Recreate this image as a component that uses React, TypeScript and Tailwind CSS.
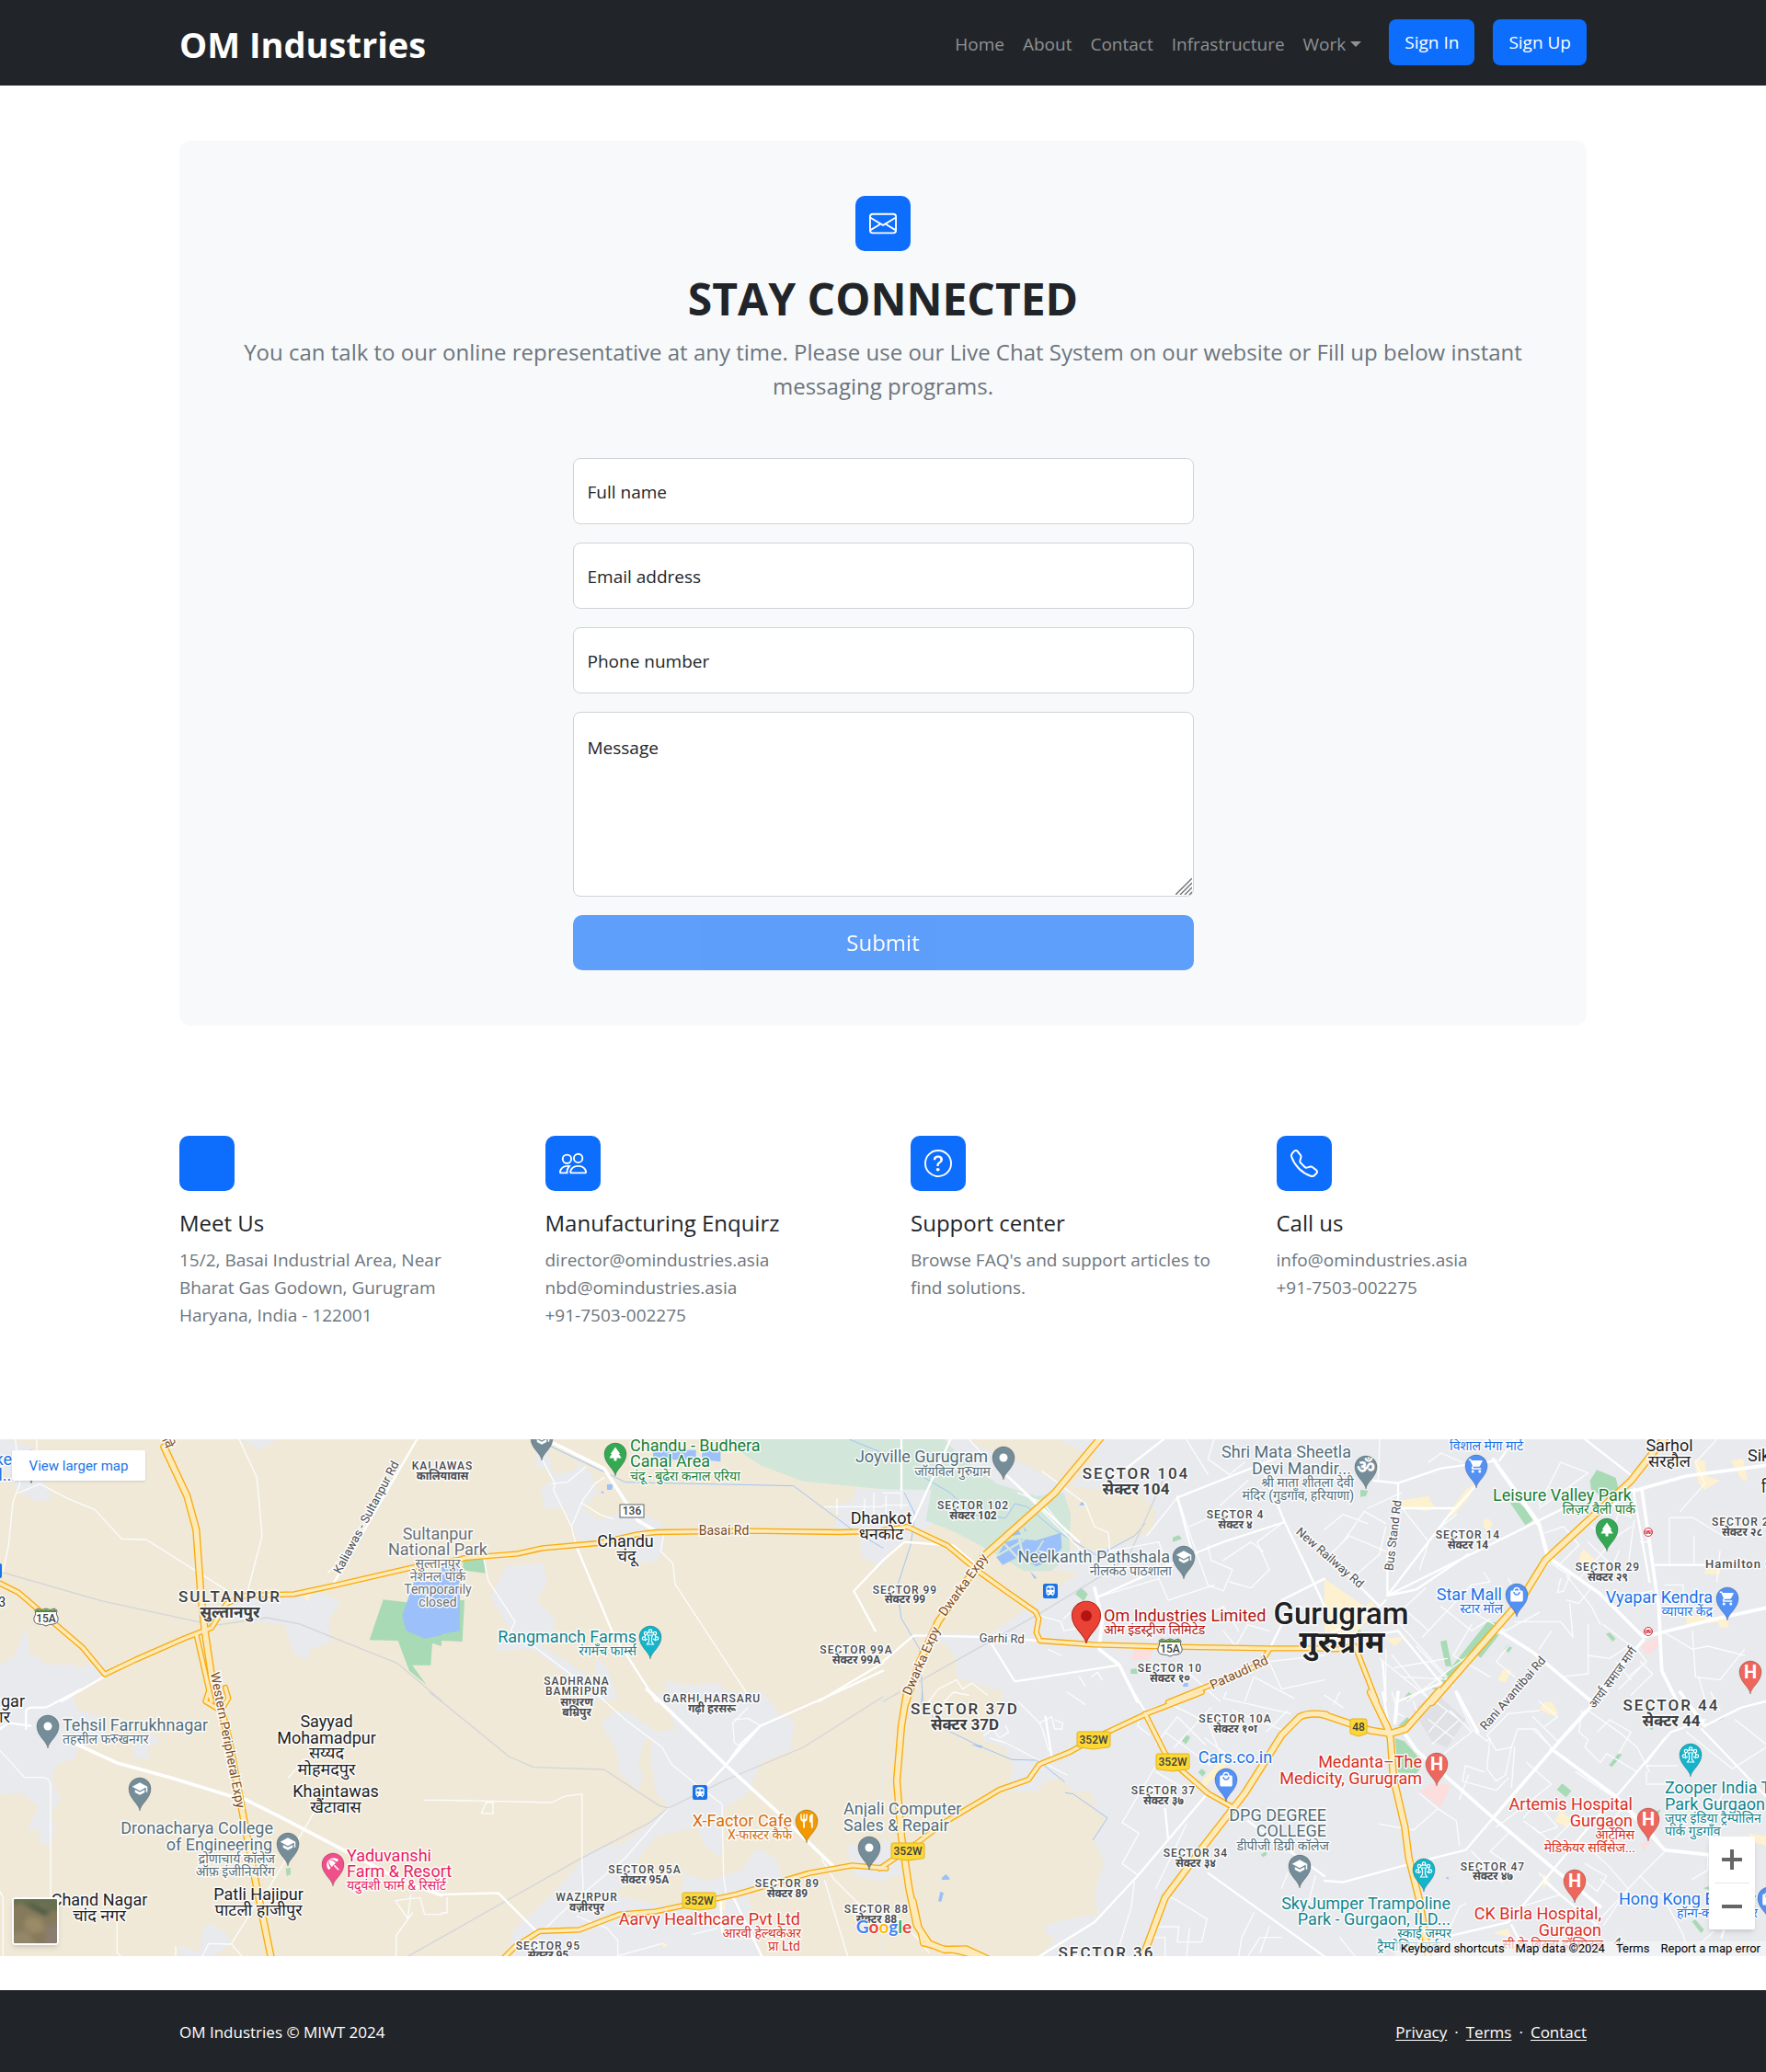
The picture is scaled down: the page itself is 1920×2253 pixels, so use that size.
import type { ReactNode } from "react";
import { BsEnvelope, BsPeople, BsQuestionCircle, BsTelephone } from "react-icons/bs";
import { MdBeachAccess, MdLocalMall, MdPark, MdRestaurant, MdSchool, MdShoppingCart, MdTrain } from "react-icons/md";

/* ---------- Map data: eight tiles, three units to a pixel ---------- */

type Tile = "A" | "B" | "C" | "D" | "E" | "F" | "G" | "H";

const origin: Record<Tile, [number, number]> = {
  A: [0, -5],
  B: [480, -5],
  C: [960, -5],
  D: [1440, -5],
  E: [0, 275],
  F: [480, 275],
  G: [960, 275],
  H: [1440, 275],
};

const place = (t: Tile, x: number, y: number): [number, number] => [
  Math.round(origin[t][0] + x / 3),
  Math.round(origin[t][1] + y / 3),
];

const LAND = "#f0e9d8";
const TOWN = "#e8eaed";
const GOLF = "#d2e6da";
const PARK = "#a8dab5";
const WATER = "#9cc0f9";
const SHOPS = "#fdf1cf";
const CLINIC = "#fbdedd";

const areas: [Tile, string, string][] = [
  ["A", TOWN, "M20 15L100 40L125 110L170 212L120 218L60 180L0 100V15z"],
  ["A", TOWN, "M780 15H905L845 52L820 30z"],
  ["A", TOWN, "M760 530L1040 515L1112 545L1075 600V680L1010 700L1005 738L955 710L930 620L760 600z"],
  ["A", SHOPS, "M985 525L1015 518L1005 545z"],
  ["A", TOWN, "M85 625L98 720L130 725L150 775L210 780L345 730L330 790L190 875H0V750L45 725z"],
  ["A", PARK, "M1250 538L1440 560V690L1410 680L1405 752H1345L1390 815L1335 770L1298 672L1205 670z"],
  ["A", WATER, "M1350 480H1440V655L1385 665L1325 640L1312 590z"],
  ["B", PARK, "M70 410L138 405L143 452L70 442zM0 540H75L68 675L0 672z"],
  ["B", WATER, "M0 425L60 430V640L0 650z"],
  ["B", TOWN, "M310 60L345 50L365 130L430 120L450 90L490 130L510 190L460 240L515 280L580 255L640 250L720 290L725 370L700 415L650 418L560 350L450 350L400 240L335 240L325 170L360 150L350 110L310 110z"],
  ["B", TOWN, "M210 430L330 420L345 480L310 540L370 600L365 640L330 690L500 800L505 730L540 760L575 860L500 870L400 780L300 700L170 705L225 640L160 530z"],
  ["B", TOWN, "M730 800L800 820L900 810L950 850L1020 840V870H740z"],
  ["B", GOLF, "M915 15H1440V178L1180 152L1040 100z"],
  ["B", TOWN, "M1350 175L1440 178V430L1370 400L1365 330L1280 300L1300 250L1250 240L1345 215z"],
  ["B", WATER, "M690 50H910V88L850 82V50H830V82H745L690 72zM540 162H560L555 180H540zM520 190L525 182L530 192z"],
  ["C", TOWN, "M0 15H1440V870H0z"],
  ["C", LAND, "M275 15H570L640 50L700 78L600 175L580 165L480 105L360 60z"],
  ["C", LAND, "M600 165L700 180L840 190L890 250L880 310L800 350L690 380L610 370z"],
  ["C", LAND, "M0 400L90 330L190 280L330 370L400 400L500 450L570 440L640 450L480 560L350 650H0z"],
  ["C", LAND, "M0 640L100 655L200 680L240 730V790L385 840L390 875H0z"],
  ["C", GOLF, "M0 15H200L250 70L370 160L500 200L590 190L612 260L608 390L550 445H460L370 390L240 320L140 280L158 180L0 178z"],
  ["C", WATER, "M370 400L400 350L440 340L500 345L580 320L583 370L550 410L500 430L440 400L390 425zM420 330L440 310L450 325zM460 300L468 315H462zM480 447L500 465L495 472zM640 230L650 215L657 230zM980 810H995V822H978z"],
  ["C", GOLF, "M396 350L442 400L436 404L390 355zM448 338L462 395L455 400L440 342zM370 392L460 340L464 345L374 398zM470 425L520 345L526 345L478 425z"],
  ["C", PARK, "M627 520L645 498L668 520L655 543zM945 335L965 328L975 340L945 350zM808 765L830 762V780H808z"],
  ["C", CLINIC, "M822 695L880 700L870 735L808 732z"],
  ["D", TOWN, "M-2 15H1440V870H-2z"],
  ["D", PARK, "M866 150L888 115L950 140L965 200L930 215L870 180zM605 222H635L690 272L655 295zM378 675L398 670L415 755H395zM380 800L530 612H570L390 812zM335 850L355 825L375 825L350 862zM495 718L540 650L570 652L510 728zM918 650L930 645L950 665L940 675zM587 700L597 686L612 695L600 712zM262 855L275 838L287 845L272 862zM100 630L120 640L118 650H90zM117 180L142 182L135 200L117 203z"],
  ["D", SHOPS, "M400 262L460 180L490 160L475 200L420 265zM250 215L340 200L345 215L365 240L330 250L250 235zM517 280L535 272L550 295L530 312L517 298zM830 400L845 372L888 415L830 420zM0 470L130 560L160 540V580L100 650L20 700L0 690zM1205 80L1240 85L1245 135L1290 150L1240 180L1220 160zM1325 85L1365 78L1380 150L1360 145zM1180 590L1320 600L1315 630H1290L1285 612L1180 620zM565 800L580 770L610 765L590 810zM1240 440L1290 430V455H1240zM200 665L260 660L230 690z"],
  ["D", CLINIC, "M1030 690L1085 660L1088 690L1055 720z"],
  ["E", TOWN, "M0 -90H250L240 30L260 60L330 80L340 150L250 180L245 215L185 235L170 270L175 310L200 345L165 395L180 440L165 500L130 490L125 450L90 450L125 375L75 330L0 335z"],
  ["E", TOWN, "M435 165L500 130L520 165L480 180L490 220L437 212zM665 762L690 755L740 790L755 820L680 870H590L585 825L650 850zM960 270L940 280V275z"],
  ["E", PARK, "M932 575L947 572L948 595L935 600z"],
  ["F", TOWN, "M700 0H1050L1100 70L1150 90L1140 190L1040 230L1000 330L920 380L910 540L860 500L830 440L700 470L650 530L620 610L560 660L690 690L780 700L790 590L870 615L980 580L1025 510L1090 540L1110 600L1000 660L1040 860H210L240 770L330 690L380 640L480 520L600 490L690 420L740 370L700 330L680 200L690 150L660 160L640 240L660 270L640 320L580 260L570 190L520 100L570 60L620 70L700 130L765 120L740 60z"],
  ["F", TOWN, "M1320 500H1440V620L1350 600z"],
  ["F", SHOPS, "M905 680H925V712H905zM720 815L740 825L722 835z"],
  ["G", TOWN, "M-2 -10H1440V862H-2z"],
  ["G", LAND, "M0 -10H385L390 50L330 110L328 160L395 178L425 240L400 325L500 325L530 290L580 278L620 325L680 325L700 395L732 410L685 485L722 550L690 650L702 725L600 740L530 760L532 790L565 805L510 862H0V610L60 595L50 500L0 480z"],
  ["G", WATER, "M192 605L205 594L218 607L215 612H192zM187 650L198 655L190 684L180 682zM285 170L325 175L320 182z"],
  ["G", PARK, "M975 158L990 138L1002 148L988 170zM1028 262L1040 250L1053 262L1043 275zM1232 530L1250 518L1252 530L1240 538z"],
  ["G", SHOPS, "M1040 290L1110 210L1145 190L1120 240L1050 310z"],
  ["H", TOWN, "M-2 -10H1440V862H-2z"],
  ["H", "#dfe1e5", "M290 60L360 0L460 90L400 180L350 160z"],
  ["H", PARK, "M230 150L260 160L300 205L320 240L300 265L240 262zM262 15L275 0L288 8L272 24zM240 110L270 82L280 92L255 112zM758 318L775 298L805 322L788 343zM928 238L960 198L970 205L938 244zM1075 390L1098 383L1085 402zM1198 748L1210 742L1238 775L1228 786zM1235 640L1255 632V645zM1060 120L1075 110L1070 122z"],
  ["H", CLINIC, "M310 325L345 300L410 300L400 330L378 375zM1028 495L1070 482L1040 515z"],
  ["H", SHOPS, "M700 55L720 30L745 35L762 70L745 78zM750 420L770 385L800 410L790 440zM550 785L600 770L610 800zM712 590L735 610L712 645zM1380 460L1440 470V500L1400 490z"],
  ["H", WATER, "M1283 86L1310 76L1300 86L1285 92zM395 605L404 602V612z"],
];

type Kind = "stream" | "rail" | "lane" | "street" | "avenue" | "road" | "highway";

const lines: [Tile, Kind, string][] = [
  ["B", "stream", "M350 35L600 155L1148 167L1340 310L1440 370M1330 15L1440 60"],
  ["C", "stream", "M70 190L105 260L90 360L45 500L60 600L120 700L130 870M100 120L220 190L290 260L400 272L430 225L470 235L560 310L700 395L820 330L855 290M700 400L740 375"],
  ["G", "stream", "M128 0L125 40L200 120L320 178L420 220L505 222L592 293M595 328L620 332L732 410L685 482"],
  ["A", "rail", "M0 447L330 542L700 622L870 597L975 617L1295 745L1440 868"],
  ["E", "rail", "M1400 0L1440 30M1330 862L1440 800"],
  ["F", "rail", "M0 30L220 210L300 245L530 252L710 370L740 378L930 285L1180 180L1440 15M0 800L450 545L680 425L740 378"],
  ["C", "rail", "M0 870L180 770L520 578L700 468L800 400L915 145"],
  ["A", "lane", "M50 15L65 160L42 220L28 360L10 447M120 15L120 110M60 190L130 160L220 208L310 245L397 340L477 342L740 508M780 15L838 140L855 330L808 510M1070 450L1085 435"],
  ["B", "lane", "M328 80L370 160L365 180L424 300L460 215L500 160L530 140M360 160L410 155L470 105M455 222L520 262L560 275M424 300L440 365M725 325L715 380L755 420L762 488L1000 850M138 405L152 475L240 610L225 640L300 690L420 780L530 865M1250 235H1440M1290 210V260M1380 210V270M1410 190V260"],
  ["F", "lane", "M500 0L600 90L720 180L750 235L830 300L915 365L920 600L930 670M740 380L600 540L470 650L380 730L320 790M1000 50L950 100L955 165L970 175M955 90L1000 85L1040 110M0 352L360 360L400 340L458 332V540L463 660M130 395L145 360H168V397zM440 730L540 770L575 810V862M0 720H18V670M1240 545L1280 610L1370 700M820 790L900 770M575 860L720 820"],
  ["E", "lane", "M0 190L80 278H140Q165 280 165 310V670M0 650L10 670V862M382 750V850L395 862M573 862V830M1050 350L930 550L870 650M1290 680L1330 740L1340 660M1290 680L1370 670L1385 725H1440M1345 720L1292 795V862M1385 352H1440M940 280L990 220M755 820L830 700M660 862L680 820L755 822L790 862"],
  ["C", "lane", "M0 190H60V240M10 200V260H60M0 230H80M280 15L340 80M400 130L600 330L680 410M440 190L520 220L600 320M520 120L660 225L690 300L735 320L740 380M510 380L660 415M700 530L900 470L895 420M740 380L900 350L930 440M960 200L1010 350L1060 490L1110 510L1140 440L1070 410L1060 360M980 0L1060 130M1000 300L1130 240M1080 15L1060 80L1130 130L1180 90M1110 410L1200 350L1240 380M1130 480L1200 500L1260 440L1220 350L1300 290M1190 150L1100 230M960 205L860 330M1110 640L1150 690L1190 620L1260 640M900 470L930 540L1080 490M1060 590L1110 560L1160 640M510 590L580 610L590 640L640 630M590 600L610 580M640 790L660 820M1300 600L1360 560L1440 600M1000 780L1100 870M1180 870L1210 790L1340 860M1250 720L1300 830L1440 800M1260 740L1440 720M540 700L580 720M680 790L700 775L715 800"],
  ["C", "lane", "M150 870L180 830L240 800L260 830L290 810L340 850M200 870L230 840L280 850"],
  ["D", "lane", "M0 60L60 30M180 15L175 150M100 100L140 120M140 240L250 190M0 310L60 260L140 290M60 350L130 250L200 290M20 390L80 330L200 380M100 460L180 390L200 300M250 235L340 350L310 440M430 260L380 300L480 350M340 90L380 60L450 90M700 230L770 90L860 125L700 240M720 320L780 300L830 360L760 430M740 420L800 460L780 510L760 515L770 470M790 460L870 560L900 620M870 500L830 550L790 540M620 610H770L810 660L800 550M470 570L590 640L700 580M480 620L420 720L540 790M320 660L480 490L540 480L520 450M300 690L420 820M200 620L330 500M230 600L400 790M250 560L340 640M220 720L340 860M600 690L560 740L620 790M860 620V780L770 790M920 370L830 470M860 350L940 430L960 380M900 320L870 300M1000 270L960 250L920 380M1010 280L990 430M1130 270H1200L1300 330M1125 270V420M1080 425H1240M1205 330V420M1280 15L1210 90L1240 160L1160 250M1290 380L1280 480M1110 490H1170V590M1110 520H1170M1110 560H1170M860 720L930 730L990 690M910 620L1000 690M950 740L1000 800M990 790L1050 740L1020 700M960 830L1030 760M1000 850L1070 780L1030 740M1100 640L1200 700L1250 690L1370 720M1200 640L1210 790L1290 800L1370 700M1220 790L1240 860M1030 350H1060M1010 520L1070 510M940 340L1000 300M600 470L640 540M700 700L740 640"],
  ["D", "lane", "M200 700V870M180 730L340 860M230 760L400 730M250 790L430 800M270 870L470 720M380 560L480 640L540 600"],
  ["G", "lane", "M0 700L110 800L150 850M330 140L360 120L380 150L410 130L400 110M350 150L400 165L600 270M440 30L510 100L530 90L550 80L560 120H585V100L560 90M510 100L520 120L540 190M600 0L660 40M890 240L780 425L835 460L780 560L830 595M890 260L1010 330M940 40L1060 100L1100 200M890 170L960 80L1050 170M920 130L1070 240M950 180L1070 50M1120 0L1110 20L1330 70M1140 60L1320 130M1250 130L1320 60M1050 150L1130 210M920 660L960 680L1057 740L1040 815H960L965 765L880 765M860 800H920V862M1160 862L1170 800L1210 720M1190 862L1230 800H1300M1230 850L1260 765M820 620L810 700L760 862M1000 770L990 862M840 80L830 110L870 140M990 430L890 640M1300 640L1320 590M1410 600L1390 680L1430 700"],
  ["H", "lane", "M0 10L60 50M50 0L30 40M220 0L240 70L260 80M290 30L300 60L360 30L440 90L350 170M340 90L420 150M400 60L340 130M390 200L480 130L410 60M430 10L480 120L530 160L540 150L530 250L560 290L590 270L610 180L560 190L530 140L600 70L700 60M610 180L630 120H690L740 180L680 120M620 180L610 310M600 280L560 320L450 290L460 240L520 260M310 330L370 380L290 450L180 430M370 380L430 420L440 500M470 270L440 350M840 60L830 130L860 155L850 180L900 230L920 200L1020 260L960 330M860 60L960 130L1020 180L1060 260M890 130L930 90L1000 130L960 200M680 80L760 160L850 60M700 30L760 80L720 110M650 410L690 360L760 440L700 460L650 420M680 440L740 490L830 400M560 440L640 380L740 300L660 230M820 260L940 340M600 460L540 520L600 560M480 520L580 620M700 590L770 660L640 700M840 490L920 560L990 640L910 760M850 560L920 600L890 650L830 600M900 610L1000 690M950 340L1050 430L1100 500M1050 240H1150M1050 260V300H1170M970 380L920 440M1250 530V580L1200 610M1110 520L1030 600L1110 680L1170 790L1190 862M1030 600L880 760L790 862M1300 862L1210 830M400 790L440 700L460 690M50 800L100 862M1260 0L1290 60M1340 90L1440 170M1180 862L1270 780M1300 330L1230 460M1180 130L1330 250L1440 180"],
  ["F", "lane", "M1250 615L1325 862"],
  ["A", "street", "M1360 15L1085 490M200 870L342 788"],
  ["E", "street", "M85 120V60Q90 50 110 50H150L265 -10M0 120L30 100L100 110"],
  ["B", "street", "M440 365L560 650L700 870M1440 410L1345 510L1415 640M1230 870L1440 745"],
  ["F", "street", "M1040 110L930 235L860 310M1440 -70L1290 0L1120 75L1040 110L980 165L930 235M0 660L185 655L320 790M950 665L1045 862M910 670L915 780"],
  ["C", "street", "M60 15V180M220 15L90 300M0 410L70 350L230 362L320 440M0 740L100 655L340 660M510 672L340 660L430 805L770 752L740 730M915 15L755 140M400 130L640 350M960 205L1300 70L1440 60M960 205L1010 390L1110 350L1310 285L1380 430L1440 560M1310 285L1230 90M1010 390L700 530M1310 600L1262 697M1300 540L1440 470"],
  ["D", "street", "M160 150L240 158L380 110L560 85M560 100L700 300L730 420M240 158V240L420 240M490 170L400 270L205 525M205 525L680 290L780 240M570 85L620 15M205 525L300 505L470 390M205 525L205 400L240 230M80 460L180 560L0 660M180 560L200 540M850 15L1010 140M1000 190L940 230M1010 175V200L1060 480M1080 425H1270M180 650L240 640L380 810M380 810L240 870M190 740L200 870"],
  ["G", "street", "M530 80L550 210M860 70L810 -10M510 862L690 750L830 600L1050 340M1060 590L1440 862M1190 420L1440 600M920 380L930 480"],
  ["H", "street", "M0 615L60 620L280 560L460 515L550 410M190 0L210 110M390 800L600 750L720 610L870 430L960 330L1130 130M1110 150L1050 230M610 760L640 820L680 862M720 620L900 770M1230 120L1440 340M1240 110L1360 50L1440 30M1130 130L1240 90M1330 690L1295 800"],
  ["B", "avenue", "M360 25L530 110L640 280L700 315"],
  ["E", "avenue", "M250 170L380 230L560 280L750 338L800 350L920 410L1130 520L1320 620L1440 662"],
  ["F", "avenue", "M670 -10L930 240L1100 395L1280 570"],
  ["C", "avenue", "M690 500L715 600L705 700L770 750L830 870"],
  ["D", "avenue", "M550 80L700 290L730 400L900 520L1040 660L1280 600L1440 565M960 190L1020 180L1180 135L1440 100M1035 180L1090 560L1100 770L1150 870M570 640L680 710L870 870M1040 670L870 870"],
  ["H", "avenue", "M265 140L300 190L550 410L740 570L900 700M430 0L500 130M550 410L740 190L920 -10M740 185L950 340L1110 515L1250 530M1160 0L1240 110M240 0L230 100"],
  ["A", "road", "M0 485L60 515L130 575L270 695L342 782L440 735L600 665L690 630L740 550L800 525L960 520L1090 492L1350 432L1510 405M640 650L690 870"],
  ["B", "road", "M70 403L250 388L330 370L510 354L640 325L700 318L1000 314L1300 318L1445 314"],
  ["C", "road", "M0 312L80 300L210 362L310 445L400 510L498 578L508 600L500 645L512 672L690 685L940 692L1260 697L1460 697M930 873L1060 820L1230 750L1262 697"],
  ["D", "road", "M-40 697L40 700L100 690L170 870"],
  ["E", "road", "M680 0L670 30L720 60L745 20L735 -15"],
  ["F", "road", "M1450 575L1340 565L1200 590L960 660L840 685L700 715L580 725L450 775L320 780L240 830L200 870"],
  ["G", "road", "M1040 0L860 70L700 145L610 195L510 235L475 285L380 318L200 425L100 500L-10 575M855 70L920 200L980 260L1060 330L1140 375M100 680L130 820L240 845L340 870"],
  ["A", "highway", "M535 40L610 200L640 310L655 520L668 640L692 800L712 870"],
  ["C", "highway", "M710 10L560 190L330 395L180 610L120 740L75 873"],
  ["D", "highway", "M1110 10L1000 150L720 410L640 540L350 873"],
  ["E", "highway", "M705 -10L745 150L785 360L830 600L885 870"],
  ["G", "highway", "M78 0L60 110L45 290L60 470L85 640L110 760L150 820L200 840L270 838L340 870M845 870L920 670L1040 510L1180 330L1300 140L1360 80Q1390 65 1445 74"],
  ["H", "highway", "M-5 73L150 125L215 135L265 120L375 -5M150 0L205 115L215 150L225 280L262 440L275 540L310 680L340 870"],
];

const plain: Record<string, string> = {
  stream: "#a3c3f5",
  rail: "#d3d5d9",
  lane: "#fbfcfd",
  street: "#ffffff",
  avenue: "#ffffff",
};
const plainWidth: Record<string, number> = { stream: 3, rail: 4, lane: 4, street: 7, avenue: 11 };

type Tone = "town" | "sector" | "big" | "slate" | "gray" | "blue" | "teal" | "green" | "red" | "pin" | "orange" | "pink" | "city";
type Anchor = "start" | "middle" | "end";

const toneClass: Record<Tone, string> = {
  town: "fill-[#202124]",
  sector: "fill-[#4a4d52]",
  big: "fill-[#3c4043]",
  slate: "fill-[#546e7a]",
  gray: "fill-[#6b7075]",
  blue: "fill-[#1a73e8]",
  teal: "fill-[#12858f]",
  green: "fill-[#188038]",
  red: "fill-[#d93025]",
  pin: "fill-[#b31412]",
  orange: "fill-[#d56e0c]",
  pink: "fill-[#e91e63]",
  city: "fill-[#202124]",
};

// District names are spaced out in Latin script and bold in Devanagari.
const scriptClass = (tone: Tone, name: string) => {
  const devanagari = /[\u0900-\u097F]/.test(name);
  if (tone === "sector") return devanagari ? "font-bold" : "font-medium tracking-[1px]";
  if (tone === "big") return devanagari ? "font-bold" : "font-medium tracking-[2px]";
  if (tone === "city") return devanagari ? "font-bold" : "font-medium";
  return "";
};

// tile, x, baseline y, anchor, tone, size, text
const labels: [Tile, number, number, Anchor, Tone, number, string][] = [
  ["A", 40, 98, "end", "blue", 18, "ke"],
  ["A", 50, 151, "end", "blue", 18, "d..."],
  ["A", 18, 560, "end", "town", 14, "3"],
  ["A", 1442, 115, "middle", "sector", 12, "KALIAWAS"],
  ["A", 1442, 147, "middle", "sector", 12, "कालियावास"],
  ["A", 750, 545, "middle", "big", 17, "SULTANPUR"],
  ["A", 750, 596, "middle", "big", 17, "सुल्तानपुर"],
  ["B", -12, 341, "middle", "gray", 18, "Sultanpur"],
  ["B", -12, 393, "middle", "gray", 18, "National Park"],
  ["B", -12, 436, "middle", "gray", 14, "सुल्तानपुर"],
  ["B", -12, 477, "middle", "gray", 14, "नेशनल पार्क"],
  ["B", -12, 519, "middle", "gray", 14, "Temporarily"],
  ["B", -12, 560, "middle", "gray", 14, "closed"],
  ["B", 616, 54, "start", "green", 18, "Chandu - Budhera"],
  ["B", 616, 106, "start", "green", 18, "Canal Area"],
  ["B", 616, 149, "start", "green", 14, "चंदू - बुढेरा कनाल एरिया"],
  ["B", 600, 365, "middle", "town", 18, "Chandu"],
  ["B", 602, 415, "middle", "town", 18, "चंदू"],
  ["B", 636, 678, "end", "teal", 18, "Rangmanch Farms"],
  ["B", 636, 719, "end", "teal", 14, "रंगमँच फार्म्स"],
  ["B", 442, 816, "middle", "sector", 12, "SADHRANA"],
  ["B", 442, 850, "middle", "sector", 12, "BAMRIPUR"],
  ["F", 442, 44, "middle", "sector", 12, "साधरण"],
  ["F", 442, 77, "middle", "sector", 12, "बम्रिपुर"],
  ["F", 882, 32, "middle", "sector", 12, "GARHI HARSARU"],
  ["F", 882, 65, "middle", "sector", 12, "गढ़ी हरसरू"],
  ["C", 343, 91, "end", "slate", 18, "Joyville Gurugram"],
  ["C", 350, 134, "end", "slate", 14, "जॉयविल गुरुग्राम"],
  ["C", -6, 291, "middle", "town", 18, "Dhankot"],
  ["C", -6, 342, "middle", "town", 18, "धनकोट"],
  ["C", 293, 244, "middle", "sector", 12, "SECTOR 102"],
  ["C", 293, 277, "middle", "sector", 12, "सेक्टर 102"],
  ["C", 826, 145, "middle", "big", 17, "SECTOR 104"],
  ["C", 826, 196, "middle", "big", 17, "सेक्टर 104"],
  ["C", 72, 518, "middle", "sector", 12, "SECTOR 99"],
  ["C", 72, 550, "middle", "sector", 12, "सेक्टर 99"],
  ["C", -86, 713, "middle", "sector", 12, "SECTOR 99A"],
  ["C", -86, 746, "middle", "sector", 12, "सेक्टर 99A"],
  ["C", 935, 417, "end", "slate", 18, "Neelkanth Pathshala"],
  ["C", 942, 460, "end", "slate", 14, "नीलकंठ पाठशाला"],
  ["C", 1148, 272, "middle", "sector", 12, "SECTOR 4"],
  ["C", 1148, 305, "middle", "sector", 12, "सेक्टर ४"],
  ["C", 720, 608, "start", "pin", 18, "Om Industries Limited"],
  ["C", 720, 650, "start", "pin", 14, "ओम इंडस्ट्रीज लिमिटेड"],
  ["C", 936, 773, "middle", "sector", 12, "SECTOR 10"],
  ["C", 936, 806, "middle", "sector", 12, "सेक्टर १०"],
  ["C", 1495, 617, "middle", "city", 33, "Gurugram"],
  ["C", 1498, 712, "middle", "city", 33, "गुरुग्राम"],
  ["D", 88, 76, "end", "slate", 18, "Shri Mata Sheetla"],
  ["D", 88, 128, "end", "slate", 18, "Devi Mandir..."],
  ["D", 96, 170, "end", "slate", 14, "श्री माता शीतला देवी"],
  ["D", 96, 212, "end", "slate", 14, "मंदिर (गुडगाँव, हरियाणा)"],
  ["D", 528, 51, "middle", "blue", 14, "विशाल मेगा मार्ट"],
  ["D", 1003, 216, "end", "green", 18, "Leisure Valley Park"],
  ["D", 1013, 258, "end", "green", 14, "लिज़र वैली पार्क"],
  ["D", 1126, 55, "middle", "town", 18, "Sarhol"],
  ["D", 1126, 106, "middle", "town", 18, "सरहौल"],
  ["D", 1380, 87, "start", "town", 18, "Sik"],
  ["D", 1425, 188, "start", "town", 18, "सि"],
  ["D", 468, 339, "middle", "sector", 12, "SECTOR 14"],
  ["D", 468, 372, "middle", "sector", 12, "सेक्टर 14"],
  ["D", 924, 444, "middle", "sector", 12, "SECTOR 29"],
  ["D", 924, 477, "middle", "sector", 12, "सेक्टर २९"],
  ["D", 1264, 297, "start", "sector", 12, "SECTOR 28"],
  ["D", 1297, 329, "start", "sector", 12, "सेक्टर २८"],
  ["D", 1243, 434, "start", "sector", 13, "Hamilton Ct"],
  ["D", 580, 539, "end", "blue", 18, "Star Mall"],
  ["D", 582, 581, "end", "blue", 14, "स्टार मॉल"],
  ["D", 1265, 549, "end", "blue", 18, "Vyapar Kendra"],
  ["D", 1267, 592, "end", "blue", 14, "व्यापार केंद्र"],
  ["E", 80, 47, "end", "town", 18, "nagar"],
  ["E", 34, 98, "end", "town", 18, "गर"],
  ["E", 204, 125, "start", "slate", 18, "Tehsil Farrukhnagar"],
  ["E", 204, 168, "start", "slate", 14, "तहसील फरुखनगर"],
  ["E", 1064, 115, "middle", "town", 18, "Sayyad"],
  ["E", 1064, 167, "middle", "town", 18, "Mohamadpur"],
  ["E", 1064, 217, "middle", "town", 18, "सय्यद"],
  ["E", 1064, 270, "middle", "town", 18, "मोहमदपुर"],
  ["E", 1096, 342, "middle", "town", 18, "Khaintawas"],
  ["E", 1096, 392, "middle", "town", 18, "खैंटावास"],
  ["E", 890, 463, "end", "slate", 18, "Dronacharya College"],
  ["E", 888, 516, "end", "slate", 18, "of Engineering"],
  ["E", 896, 558, "end", "slate", 14, "द्रोणाचार्य कॉलेज"],
  ["E", 896, 600, "end", "slate", 14, "ऑफ़ इंजीनियरिंग"],
  ["E", 1132, 551, "start", "pink", 18, "Yaduvanshi"],
  ["E", 1132, 603, "start", "pink", 18, "Farm & Resort"],
  ["E", 1132, 646, "start", "pink", 14, "यदुवंशी फार्म & रिसॉर्ट"],
  ["E", 844, 679, "middle", "town", 18, "Patli Hajipur"],
  ["E", 844, 730, "middle", "town", 18, "पाटली हाजीपुर"],
  ["E", 325, 697, "middle", "town", 18, "Chand Nagar"],
  ["E", 325, 747, "middle", "town", 18, "चांद नगर"],
  ["F", 1144, 437, "end", "orange", 18, "X-Factor Cafe"],
  ["F", 1144, 480, "end", "orange", 14, "X-फास्टर कैफे"],
  ["F", 1310, 400, "start", "slate", 18, "Anjali Computer"],
  ["F", 1310, 453, "start", "slate", 18, "Sales & Repair"],
  ["F", 662, 591, "middle", "sector", 12, "SECTOR 95A"],
  ["F", 662, 624, "middle", "sector", 12, "सेक्टर 95A"],
  ["F", 1129, 636, "middle", "sector", 12, "SECTOR 89"],
  ["F", 1129, 669, "middle", "sector", 12, "सेक्टर 89"],
  ["F", 474, 682, "middle", "sector", 12, "WAZIRPUR"],
  ["F", 474, 715, "middle", "sector", 12, "वज़ीरपुर"],
  ["F", 1170, 760, "end", "red", 18, "Aarvy Healthcare Pvt Ltd"],
  ["F", 1172, 802, "end", "red", 14, "आरवी हेल्थकेअर"],
  ["F", 1170, 844, "end", "red", 14, "प्रा Ltd"],
  ["F", 348, 839, "middle", "sector", 12, "SECTOR 95"],
  ["F", 348, 871, "middle", "sector", 12, "सेक्टर 95"],
  ["F", 1418, 720, "middle", "sector", 12, "SECTOR 88"],
  ["F", 1418, 753, "middle", "sector", 12, "सेक्टर 88"],
  ["G", 266, 73, "middle", "big", 17, "SECTOR 37D"],
  ["G", 266, 124, "middle", "big", 17, "सेक्टर 37D"],
  ["G", 1148, 99, "middle", "sector", 12, "SECTOR 10A"],
  ["G", 1148, 132, "middle", "sector", 12, "सेक्टर १०ा"],
  ["G", 1150, 232, "middle", "blue", 18, "Cars.co.in"],
  ["G", 914, 334, "middle", "sector", 12, "SECTOR 37"],
  ["G", 914, 367, "middle", "sector", 12, "सेक्टर ३७"],
  ["G", 1020, 536, "middle", "sector", 12, "SECTOR 34"],
  ["G", 1020, 569, "middle", "sector", 12, "सेक्टर ३४"],
  ["G", 728, 866, "middle", "big", 17, "SECTOR 36"],
  ["H", 6, 420, "end", "slate", 18, "DPG DEGREE"],
  ["H", 6, 472, "end", "slate", 18, "COLLEGE"],
  ["H", 14, 515, "end", "slate", 14, "डीपीजी डिग्री कॉलेज"],
  ["H", 318, 246, "end", "red", 18, "Medanta–The"],
  ["H", 318, 299, "end", "red", 18, "Medicity, Gurugram"],
  ["H", 1132, 59, "middle", "big", 17, "SECTOR 44"],
  ["H", 1132, 110, "middle", "big", 17, "सेक्टर 44"],
  ["H", 1110, 330, "start", "teal", 18, "Zooper India T"],
  ["H", 1110, 383, "start", "teal", 18, "Park Gurgaon"],
  ["H", 1110, 425, "start", "teal", 14, "जूपर इंडिया ट्रैम्पोलिन"],
  ["H", 1110, 467, "start", "teal", 14, "पार्क गुडगाँव"],
  ["H", 1006, 385, "end", "red", 18, "Artemis Hospital"],
  ["H", 1006, 437, "end", "red", 18, "Gurgaon"],
  ["H", 1010, 480, "end", "red", 14, "आर्टेमिस"],
  ["H", 1014, 521, "end", "red", 14, "मेडिकेयर सर्विसेज..."],
  ["H", 550, 581, "middle", "sector", 12, "SECTOR 47"],
  ["H", 550, 613, "middle", "sector", 12, "सेक्टर ४७"],
  ["H", 410, 707, "end", "teal", 18, "SkyJumper Trampoline"],
  ["H", 410, 760, "end", "teal", 18, "Park - Gurgaon, ILD..."],
  ["H", 414, 802, "end", "teal", 14, "स्काई जम्पर"],
  ["H", 380, 842, "end", "teal", 14, "ट्रैम्पोलिन पार्क"],
  ["H", 904, 742, "end", "red", 18, "CK Birla Hospital,"],
  ["H", 902, 794, "end", "red", 18, "Gurgaon"],
  ["H", 910, 836, "end", "red", 14, "सी के बिरला हॉस्पिटल"],
  ["H", 1408, 692, "end", "blue", 18, "Hong Kong Bazaar"],
  ["H", 1412, 735, "end", "blue", 14, "हॉन्ग-कॉन्ग बाज़ार"],
];

const BROWN = "fill-[#7a4a1c] text-[14px]";
const GRAY = "fill-[#4a4d52] text-[13px]";

// tile, x, y, angle, classes, text
const roadNames: [Tile, number, number, number, string, string][] = [
  ["A", 1205, 275, -62, GRAY, "Kaliawas - Sultanpur Rd"],
  ["B", 920, 328, 0, BROWN, "Basai Rd"],
  ["C", 272, 498, -54, BROWN, "Dwarka Expy"],
  ["C", 138, 745, -66, BROWN, "Dwarka Expy"],
  ["C", 386, 678, 2, GRAY, "Garhi Rd"],
  ["C", 1168, 790, -25, BROWN, "Pataudi Rd"],
  ["D", 9, 410, 41, GRAY, "New Railway Rd"],
  ["D", 238, 330, -83, GRAY, "Bus Stand Rd"],
  ["D", 625, 852, -49, GRAY, "Rani Avantibai Rd"],
  ["D", 950, 800, -54, GRAY, "आर्या समाज मार्ग"],
  ["E", 728, 160, 79, BROWN, "Western Peripheral Expy"],
  ["H", 955, 830, 45, GRAY, "Ni"],
  ["A", 530, 25, 65, BROWN, "सवे"],
];

type Glyph = "dot" | "school" | "tree" | "fun" | "H" | "cart" | "mall" | "food" | "beach" | "om";

const pinFill: Record<Glyph, string> = {
  dot: "#748d99",
  school: "#748d99",
  om: "#748d99",
  tree: "#34a853",
  fun: "#12b5cb",
  H: "#ee675c",
  cart: "#5491f5",
  mall: "#5491f5",
  food: "#f29900",
  beach: "#f0508a",
};

// tile, x and y of the tip, glyph
const pins: [Tile, number, number, Glyph][] = [
  ["A", 103, 160, "mall"],
  ["B", 328, 84, "school"],
  ["B", 568, 136, "tree"],
  ["B", 682, 733, "fun"],
  ["C", 394, 146, "dot"],
  ["C", 982, 471, "school"],
  ["D", 136, 178, "om"],
  ["D", 494, 175, "cart"],
  ["D", 920, 382, "tree"],
  ["D", 628, 594, "mall"],
  ["D", 1314, 606, "cart"],
  ["D", 1389, 846, "H"],
  ["E", 155, 182, "dot"],
  ["E", 455, 386, "school"],
  ["E", 939, 566, "school"],
  ["E", 1085, 634, "beach"],
  ["F", 1190, 493, "food"],
  ["F", 1394, 578, "dot"],
  ["G", 1119, 357, "mall"],
  ["G", 1360, 640, "school"],
  ["H", 367, 306, "H"],
  ["H", 1194, 275, "fun"],
  ["H", 1055, 487, "H"],
  ["H", 324, 652, "fun"],
  ["H", 817, 687, "H"],
  ["H", 1450, 745, "mall"],
];

const glyphIcon: Partial<Record<Glyph, typeof MdPark>> = {
  school: MdSchool,
  tree: MdPark,
  cart: MdShoppingCart,
  mall: MdLocalMall,
  food: MdRestaurant,
  beach: MdBeachAccess,
};

const PIN = "M0 0C-1-8-12-13-12-24a12 12 0 0 1 24 0C12-13 1-8 0 0z";

function Pin({ x, y, glyph }: { x: number; y: number; glyph: Glyph }) {
  const Icon = glyphIcon[glyph];
  return (
    <g transform={`translate(${x} ${y})`}>
      <path d={PIN} fill={pinFill[glyph]} stroke="#000" strokeOpacity="0.22" />
      {glyph === "dot" && <circle cy="-24" r="4.5" fill="#fff" />}
      {Icon && <Icon x={-9} y={-33} size={18} color="#fff" />}
      {glyph === "fun" && (
        <g fill="none" stroke="#fff" strokeWidth="1.2">
          <path d="M-6.5-22L-5-27L0-30L5-27L6.5-22" />
          <path d="M-2.5-26H2.5L1.5-23V-19L3.5-16H-3.5L-1.5-19V-23zM-3-22L-6-20M3-22L6-20" />
          <g fill="#12b5cb">
            <circle cx="0" cy="-30.5" r="1.7" />
            <circle cx="-5" cy="-28" r="1.7" />
            <circle cx="5" cy="-28" r="1.7" />
            <circle cx="-7" cy="-22.5" r="1.7" />
            <circle cx="7" cy="-22.5" r="1.7" />
          </g>
        </g>
      )}
      {(glyph === "H" || glyph === "om") && (
        <text y="-17" textAnchor="middle" fill="#fff" className="text-[20px] font-bold">
          {glyph === "H" ? "H" : "ॐ"}
        </text>
      )}
    </g>
  );
}

const shields: [Tile, number, number, string][] = [
  ["F", 840, 681, "352W"],
  ["G", 686, 155, "352W"],
  ["G", 945, 228, "352W"],
  ["G", 82, 519, "352W"],
  ["H", 112, 114, "48"],
];
const stateShields: [Tile, number, number][] = [
  ["A", 150, 598],
  ["C", 937, 695],
];
const stations: [Tile, number, number][] = [
  ["C", 547, 511],
  ["F", 843, 326],
  ["A", -19, 443],
];
const metros: [Tile, number, number][] = [
  ["D", 1057, 317],
  ["D", 1057, 641],
];

const sizeClass: Record<number, string> = {
  12: "text-[12px]",
  13: "text-[13px]",
  14: "text-[14px]",
  17: "text-[17px]",
  18: "text-[18px]",
  33: "text-[33px]",
};

const tileShift = (t: Tile) => `translate(${origin[t][0]} ${origin[t][1]}) scale(0.33333)`;

function MapDrawing() {
  const highways = lines.filter(([, k]) => k === "road" || k === "highway");
  return (
    <svg
      viewBox="0 0 1920 562"
      preserveAspectRatio="xMidYMid slice"
      className="block h-[562px] w-full font-[Roboto,'Noto_Sans',sans-serif]"
      role="img"
      aria-label="Map of Gurugram showing Om Industries Limited"
    >
      <rect width="1920" height="562" fill={LAND} />
      {areas.map(([t, fill, d], i) => (
        <path key={i} transform={tileShift(t)} d={d} fill={fill} />
      ))}
      <g fill="none" strokeLinejoin="round" strokeLinecap="round">
        {lines
          .filter(([, k]) => k in plain)
          .map(([t, k, d], i) => (
            <path key={i} transform={tileShift(t)} d={d} stroke={plain[k]} strokeWidth={plainWidth[k]} />
          ))}
        {highways.map(([t, k, d], i) => (
          <path key={i} transform={tileShift(t)} d={d} stroke="#f9ab0c" strokeWidth={k === "highway" ? 25 : 19} />
        ))}
        {highways.map(([t, k, d], i) => (
          <path key={i} transform={tileShift(t)} d={d} stroke="#fdeab8" strokeWidth={k === "highway" ? 17 : 11} />
        ))}
      </g>

      {roadNames.map(([t, px, py, angle, cls, name], i) => {
        const [x, y] = place(t, px, py);
        return (
          <text
            key={i}
            transform={`translate(${x} ${y}) rotate(${angle})`}
            textAnchor="middle"
            stroke="#fff"
            strokeOpacity="0.85"
            strokeWidth="3"
            paintOrder="stroke"
            className={cls}
          >
            {name}
          </text>
        );
      })}

      {shields.map(([t, px, py, name], i) => {
        const [x, y] = place(t, px, py);
        const w = name.length > 2 ? 18 : 9;
        return (
          <g key={i} transform={`translate(${x} ${y})`}>
            <path
              d={`M${-w + 2}-9H${w - 2}Q${w}-9 ${w}-7V6Q${w} 8 ${w - 3} 8L0 10L${-w + 3} 8Q${-w} 8 ${-w} 6V-7Q${-w}-9 ${-w + 2}-9z`}
              fill="#fdd835"
              stroke="#e2b21c"
            />
            <text y="4" textAnchor="middle" className="fill-[#3c4043] text-[12px] font-medium">
              {name}
            </text>
          </g>
        );
      })}
      {stateShields.map(([t, px, py], i) => {
        const [x, y] = place(t, px, py);
        return (
          <g key={i} transform={`translate(${x} ${y})`}>
            <path
              d="M-12-8L-9-10Q-5-7 0-10Q5-7 9-10L12-8Q10-4 13 0Q14 6 8 7Q3 7 0 9Q-3 7-8 7Q-14 6-13 0Q-10-4-12-8z"
              fill="#fff"
              stroke="#5f6368"
            />
            <path d="M-11-8L-9-9Q-5-7 0-9Q5-7 9-9L11-8L11-6H-11z" fill="#558b2f" />
            <text y="5" textAnchor="middle" className="fill-[#3c4043] text-[12px] font-medium">
              15A
            </text>
          </g>
        );
      })}
      <g transform="translate(687 78)">
        <rect x="-13" y="-7" width="26" height="14" fill="#fff" stroke="#5f6368" />
        <text y="4" textAnchor="middle" className="fill-[#3c4043] text-[12px] font-medium">
          136
        </text>
      </g>
      {stations.map(([t, px, py], i) => {
        const [x, y] = place(t, px, py);
        return (
          <g key={i} transform={`translate(${x} ${y})`}>
            <rect x="-8" y="-8" width="16" height="16" rx="2" fill="#1a73e8" />
            <MdTrain x={-7} y={-7} size={14} color="#fff" />
          </g>
        );
      })}
      {metros.map(([t, px, py], i) => {
        const [x, y] = place(t, px, py);
        return (
          <g key={i} transform={`translate(${x} ${y})`} fill="none" stroke="#d32f3f">
            <circle r="4.5" fill="#fff" />
            <path d="M-4-1H4M-4 1H4M-2 2L0-2L2 2" />
          </g>
        );
      })}

      {pins.map(([t, px, py, glyph], i) => {
        const [x, y] = place(t, px, py);
        return <Pin key={i} x={x} y={y} glyph={glyph} />;
      })}
      <g transform="translate(1181 222)">
        <path d={PIN} transform="scale(1.3 1.27)" fill="#ea4335" stroke="#b3261e" strokeWidth="0.8" />
        <circle cy="-30" r="6" fill="#b31412" />
      </g>

      {labels.map(([t, px, py, anchor, tone, size, name], i) => {
        const [x, y] = place(t, px, py);
        return (
          <text
            key={i}
            x={x}
            y={y}
            textAnchor={anchor}
            stroke="#fff"
            strokeOpacity="0.9"
            strokeWidth="3"
            strokeLinejoin="round"
            paintOrder="stroke"
            className={`${toneClass[tone]} ${sizeClass[size]} ${scriptClass(tone, name)}`}
          >
            {name}
          </text>
        );
      })}
      <text
        x="961"
        y="537"
        textAnchor="middle"
        stroke="#fff"
        strokeWidth="2"
        paintOrder="stroke"
        className="font-[Lato,sans-serif] text-[19px] font-bold"
      >
        <tspan fill="#4285f4">G</tspan>
        <tspan fill="#ea4335">o</tspan>
        <tspan fill="#fbbc04">o</tspan>
        <tspan fill="#4285f4">g</tspan>
        <tspan fill="#34a853">l</tspan>
        <tspan fill="#ea4335">e</tspan>
      </text>
    </svg>
  );
}

function LocationMap() {
  return (
    <section className="relative overflow-hidden font-[Roboto,sans-serif]">
      <MapDrawing />
      <a
        href="#map"
        className="absolute top-3 left-[13px] flex h-[33px] w-[145px] items-center justify-center rounded-xs bg-white text-[15px] text-[#1a73e8] shadow"
      >
        View larger map
      </a>
      <button
        type="button"
        aria-label="Show satellite imagery"
        className="absolute bottom-3 left-[13px] h-[52px] w-[51px] overflow-hidden rounded border-2 border-white bg-[#7d7358] shadow-md"
      >
        <svg viewBox="0 0 47 48" className="block size-full" preserveAspectRatio="none" aria-hidden="true">
          <defs>
            <filter id="soft">
              <feGaussianBlur stdDeviation="2.5" />
            </filter>
          </defs>
          <rect width="47" height="48" fill="#857a5c" />
          <g filter="url(#soft)">
            <path d="M-4-4H52V14L38 12L30 6L20 12L8 4L-4 8z" fill="#66704f" />
            <path d="M12 4L26 8L40 14L34 18L20 10z" fill="#46553f" />
            <path d="M16 18L30 22L34 34L20 38L10 28z" fill="#9a8a66" />
            <path d="M36 30L50 26V50H34z" fill="#8b7d72" />
            <path d="M-2 38L14 34L24 50H-2z" fill="#92876a" />
          </g>
        </svg>
      </button>
      <div className="absolute right-3 bottom-[29px] flex w-[50px] flex-col rounded-xs bg-white shadow-md">
        <button type="button" aria-label="Zoom in" className="flex h-[50px] items-center justify-center">
          <svg viewBox="0 0 22 22" className="size-[22px] fill-[#666]" aria-hidden="true">
            <path d="M9 0H13V9H22V13H13V22H9V13H0V9H9z" />
          </svg>
        </button>
        <span className="mx-1.5 h-px bg-[#e6e6e6]" />
        <button type="button" aria-label="Zoom out" className="flex h-[50px] items-center justify-center">
          <svg viewBox="0 0 22 22" className="size-[22px] fill-[#666]" aria-hidden="true">
            <path d="M0 9H22V13H0z" />
          </svg>
        </button>
      </div>
      <div className="absolute right-0 bottom-0 flex h-4 items-center bg-[#f5f5f5]/70 text-[13px] leading-4 text-black">
        <button type="button" className="px-1.5">
          Keyboard shortcuts
        </button>
        <span className="px-1.5">Map data ©2024</span>
        <a href="#terms" className="px-1.5">
          Terms
        </a>
        <a href="#report" className="px-1.5">
          Report a map error
        </a>
      </div>
    </section>
  );
}

/* ---------- Page ---------- */

const navLinks = ["Home", "About", "Contact", "Infrastructure"];

function Header() {
  return (
    <header className="bg-[#212529]">
      <div className="mx-auto flex h-[93px] max-w-[1530px] items-center justify-between pb-0.5">
        <a href="#home" className="mt-1 text-[38px] font-bold text-white">
          OM Industries
        </a>
        <nav className="flex items-center text-[19px]">
          <div className="mt-1 mr-[30px] flex gap-5 text-[#909294]">
            {navLinks.map((name) => (
              <a key={name} href={`#${name.toLowerCase()}`}>
                {name}
              </a>
            ))}
            <button type="button" className="flex items-center gap-[5px]">
              Work
              <span className="border-x-6 border-t-6 border-x-transparent border-t-current" />
            </button>
          </div>
          <div className="flex gap-5">
            <button type="button" className="h-[50px] rounded-lg bg-[#0d6efd] px-[17px] text-white">
              Sign In
            </button>
            <button type="button" className="h-[50px] rounded-lg bg-[#0d6efd] px-[17px] text-white">
              Sign Up
            </button>
          </div>
        </nav>
      </div>
    </header>
  );
}

function Badge({ children }: { children?: ReactNode }) {
  return (
    <div className="flex size-[60px] items-center justify-center rounded-[10px] bg-[#0d6efd] text-[30px] text-white">
      {children}
    </div>
  );
}

function Field({ id, label, type }: { id: string; label: string; type: string }) {
  return (
    <div className="relative">
      <input id={id} type={type} className="block h-[72px] w-full rounded-lg border border-[#ced4da] bg-white px-[15px]" />
      <label htmlFor={id} className="pointer-events-none absolute inset-y-0 left-4 flex items-center pt-0.5">
        {label}
      </label>
    </div>
  );
}

function ContactPanel() {
  return (
    <section className="rounded-xl bg-[#f8f9fa] px-[60px] py-[60px]">
      <div className="flex flex-col items-center text-center">
        <Badge>
          <BsEnvelope />
        </Badge>
        <h1 className="mt-[22px] text-[48px] leading-[60px] font-bold">STAY CONNECTED</h1>
        <p className="mt-[9px] text-[24px] leading-[37px] text-[#6c757d]">
          You can talk to our online representative at any time. Please use our Live Chat System on our website or Fill up
          below instant messaging programs.
        </p>
      </div>
      <form className="mx-auto mt-[60px] flex max-w-[675px] flex-col gap-5" onSubmit={(e) => e.preventDefault()}>
        <Field id="name" label="Full name" type="text" />
        <Field id="email" label="Email address" type="email" />
        <Field id="phone" label="Phone number" type="tel" />
        <div className="relative">
          <textarea id="message" className="block h-[201px] w-full resize-none rounded-lg border border-[#ced4da] bg-white px-[15px] pt-8" />
          <label htmlFor="message" className="pointer-events-none absolute top-6 left-4">
            Message
          </label>
          <svg
            viewBox="0 0 18 18"
            className="pointer-events-none absolute right-0.5 bottom-0.5 size-[18px] stroke-[#6f6f6f]"
            aria-hidden="true"
          >
            <path d="M0 18L18 0M5 18L18 5M10 18L18 10M15 18L18 15" fill="none" strokeWidth="1.4" />
          </svg>
        </div>
        <button type="submit" disabled className="h-[60px] rounded-[10px] bg-[#0d6efd] text-[24px] text-white opacity-65">
          Submit
        </button>
      </form>
    </section>
  );
}

const contacts: { title: string; icon?: ReactNode; lines: string[] }[] = [
  {
    title: "Meet Us",
    lines: ["15/2, Basai Industrial Area, Near", "Bharat Gas Godown, Gurugram", "Haryana, India - 122001"],
  },
  {
    title: "Manufacturing Enquirz",
    icon: <BsPeople />,
    lines: ["director@omindustries.asia", "nbd@omindustries.asia", "+91-7503-002275"],
  },
  {
    title: "Support center",
    icon: <BsQuestionCircle />,
    lines: ["Browse FAQ's and support articles to", "find solutions."],
  },
  {
    title: "Call us",
    icon: <BsTelephone />,
    lines: ["info@omindustries.asia", "+91-7503-002275"],
  },
];

export default function App() {
  return (
    <div className="bg-white font-['Open_Sans','Noto_Sans',sans-serif] text-[19px] leading-[30px] text-[#212529]">
      <Header />
      <main className="mx-auto max-w-[1530px] pt-[60px]">
        <ContactPanel />
        <section className="grid grid-cols-4 gap-x-[60px] py-[120px]">
          {contacts.map(({ title, icon, lines: rows }) => (
            <div key={title}>
              <Badge>{icon}</Badge>
              <h2 className="mt-5 mb-2.5 text-[24px] leading-[30px]">{title}</h2>
              <p className="text-[#6c757d]">
                {rows.map((row) => (
                  <span key={row} className="block">
                    {row}
                  </span>
                ))}
              </p>
            </div>
          ))}
        </section>
      </main>
      <LocationMap />
      <footer className="mt-[37px] bg-[#212529] text-[17px] text-white">
        <div className="mx-auto flex h-[89px] max-w-[1530px] items-center justify-between pt-0.5">
          <span>OM Industries © MIWT 2024</span>
          <div className="flex gap-2">
            <a href="#privacy" className="underline underline-offset-2">
              Privacy
            </a>
            <span>·</span>
            <a href="#terms" className="underline underline-offset-2">
              Terms
            </a>
            <span>·</span>
            <a href="#contact" className="underline underline-offset-2">
              Contact
            </a>
          </div>
        </div>
      </footer>
    </div>
  );
}
